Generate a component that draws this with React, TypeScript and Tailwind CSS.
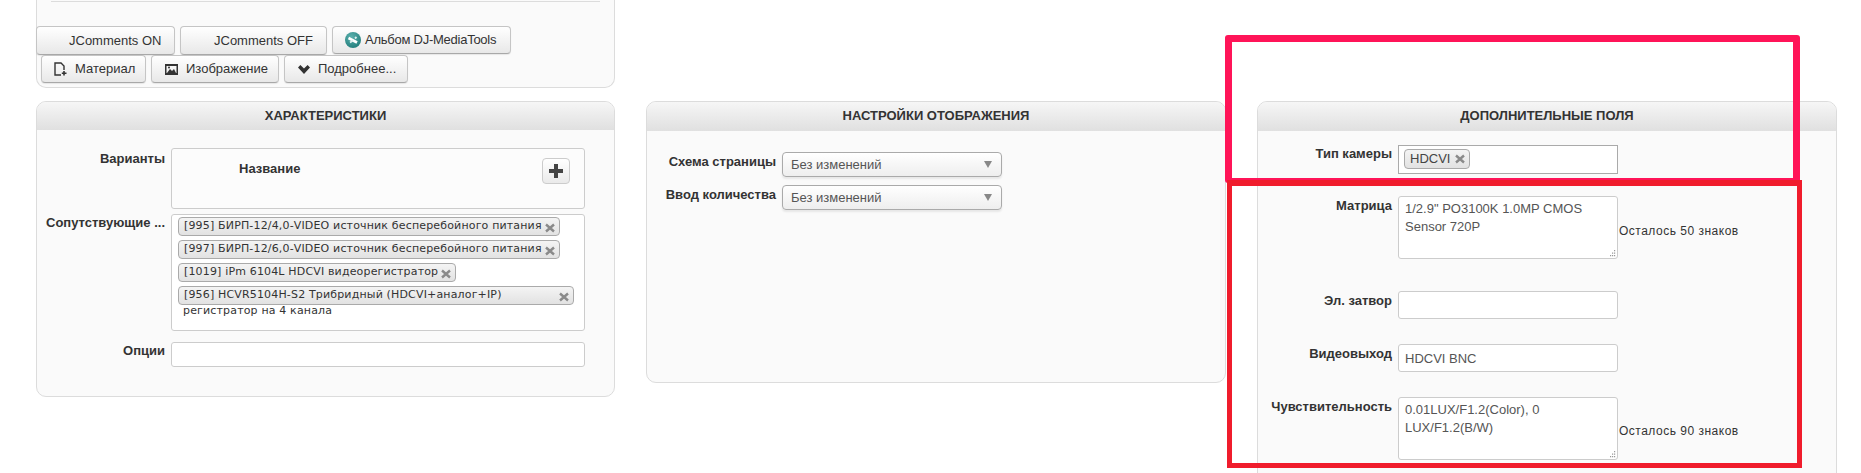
import React from "react";

const btn =
  "flex items-center rounded-[4px] border border-[#c5c5c5] border-b-[#a8a8a8] bg-gradient-to-b from-white to-[#e8e8e8] text-[13px] text-[#333] shadow-[0_1px_1px_rgba(0,0,0,0.08)]";

const XMark = ({ className }: { className?: string }) => (
  <svg className={className} width="10" height="10" viewBox="0 0 10 10">
    <path d="M1 1.5 L9 8.5 M9 1.5 L1 8.5" stroke="#8a8a8a" strokeWidth="2.4" />
  </svg>
);

const Tag = ({ text, w }: { text: string; w: number }) => (
  <div
    className="relative flex h-[19px] items-center rounded-[4px] border border-[#aaa] bg-gradient-to-b from-[#f4f4f4] to-[#e2e2e2] pl-[5px] font-['DejaVu_Sans',sans-serif] text-[11px] text-[#333] tracking-[0.16px]"
    style={{ width: w }}
  >
    <span className="whitespace-nowrap">{text}</span>
    <XMark className="absolute right-[4px] top-[5px]" />
  </div>
);

const Panel = ({ title, height, children }: { title: string; height: number; children: React.ReactNode }) => (
  <div className="w-[580px] shrink-0 rounded-[10px] border border-[#dcdcdc] bg-[#fafafa] overflow-hidden" style={{ height }}>
    <div className="h-[29px] bg-gradient-to-b from-[#f6f6f6] to-[#e0e0e0] text-center text-[13px] font-bold leading-[27px] text-[#333]">
      {title}
    </div>
    {children}
  </div>
);

const Label = ({ children, w, className }: { children: React.ReactNode; w: number; className?: string }) => (
  <div className={`shrink-0 text-right text-[13px] font-bold text-[#333] leading-[18px] whitespace-nowrap ${className ?? ""}`} style={{ width: w }}>
    {children}
  </div>
);

const Select = () => (
  <div className="flex h-[25px] w-[220px] items-center justify-between rounded-[4px] border border-[#aaa] bg-gradient-to-b from-white to-[#eee] pl-[8px] pr-[9px] text-[13px] text-[#555] shadow-[0_2px_2px_rgba(0,0,0,0.08)]">
    <span>Без изменений</span>
    <svg width="8" height="7" viewBox="0 0 8 7">
      <path d="M0 0 H8 L4 7 Z" fill="#888" />
    </svg>
  </div>
);

const field =
  "block w-[220px] rounded-[3px] border border-[#ccc] bg-white px-[6px] text-[13px] leading-[18px] text-[#555] outline-none";

const Note = ({ children, className }: { children: React.ReactNode; className?: string }) => (
  <div className={`-ml-[5px] whitespace-nowrap text-[12px] tracking-[0.5px] leading-[18px] text-[#333] ${className ?? ""}`}>{children}</div>
);

const Area = ({ value }: { value: string }) => (
  <div className="relative shrink-0">
    <textarea className={`${field} h-[63px] resize-none pt-[3px]`} defaultValue={value} />
    <svg className="absolute bottom-[2px] right-[2px]" width="7" height="7" viewBox="0 0 7 7">
      <path d="M5 0 h1.2 v1.2 h-1.2 Z M3 2.5 h1.2 v1.2 h-1.2 Z M5 2.5 h1.2 v1.2 h-1.2 Z M1 5 h1.2 v1.2 h-1.2 Z M3 5 h1.2 v1.2 h-1.2 Z M5 5 h1.2 v1.2 h-1.2 Z" fill="#999" />
    </svg>
  </div>
);

const App = () => {
  return (
    <div className="relative h-[473px] w-[1861px] overflow-hidden bg-white font-['Liberation_Sans',Arial,sans-serif]">
      <div className="flex items-start pl-[36px]">
        {/* left column */}
        <div className="w-[579px] shrink-0">
          <div className="h-[88px] rounded-b-[10px] border-x border-b border-[#dcdcdc] bg-[#fafafa]">
            <div className="mx-[14px] h-[2px] border-b border-[#dcdcdc]" />
            <div className="mt-[24px] -ml-px flex h-[29px] items-start gap-[5px]">
              <div className={`${btn} h-[29px] w-[139px] pl-[32px]`}>JComments ON</div>
              <div className={`${btn} h-[29px] w-[147px] pl-[33px]`}>JComments OFF</div>
              <div className={`${btn} h-[28px] w-[179px] pl-[12px] gap-[4px] tracking-[-0.25px]`}>
                <svg width="16" height="16" viewBox="0 0 16 16">
                  <defs>
                    <radialGradient id="album" cx="0.4" cy="0.3" r="0.8">
                      <stop offset="0" stopColor="#5bb0ad" />
                      <stop offset="1" stopColor="#1d7a78" />
                    </radialGradient>
                  </defs>
                  <circle cx="8" cy="8" r="8" fill="url(#album)" />
                  <path d="M3.5 6 L12 10.5" stroke="#fff" strokeWidth="2.6" />
                  <path d="M5 10.5 L8 8.5 M10 6.5 L11.5 5" stroke="#dff0ef" strokeWidth="1.8" />
                </svg>
                Альбом DJ-MediaTools
              </div>
            </div>
            <div className="ml-[4px] flex h-[28px] gap-[5px]">
              <div className={`${btn} h-[28px] w-[105px] pl-[12px] gap-[8px]`}>
                <svg width="13" height="14" viewBox="0 0 13 14">
                  <path d="M7 13 H1 V1 H7 L10 4 V8" fill="none" stroke="#333" strokeWidth="1.4" />
                  <path d="M10 9 V13.5 M7.8 11.2 H12.5" stroke="#333" strokeWidth="1.6" />
                </svg>
                Материал
              </div>
              <div className={`${btn} h-[28px] w-[128px] pl-[13px] gap-[8px]`}>
                <svg width="13" height="11" viewBox="0 0 13 11">
                  <path d="M0 0 H13 V11 H0 Z M1.5 2 V9 H11.5 V2 Z" fill="#333" fillRule="evenodd" />
                  <path d="M2 9 L5 5 L7 7 L9 5 L11 9 Z" fill="#333" />
                  <circle cx="4" cy="3.6" r="1" fill="#333" />
                </svg>
                Изображение
              </div>
              <div className={`${btn} h-[28px] w-[124px] pl-[13px] gap-[8px]`}>
                <svg width="12" height="9" viewBox="0 0 12 9">
                  <path d="M0 2.4 L2.4 0 L6 3.6 L9.6 0 L12 2.4 L6 9 Z" fill="#333" />
                </svg>
                Подробнее...
              </div>
            </div>
          </div>

          <div className="mt-[13px] h-[296px] w-[579px] overflow-hidden rounded-[10px] border border-[#dcdcdc] bg-[#fafafa]">
            <div className="h-[28px] bg-gradient-to-b from-[#f6f6f6] to-[#e0e0e0] text-center text-[13px] font-bold leading-[27px] text-[#333]">
              ХАРАКТЕРИСТИКИ
            </div>
            <div className="flex flex-col pt-[18px]">
              <div className="flex gap-[6px]">
                <Label w={128} className="pt-[2px]">Варианты</Label>
                <div className="relative h-[61px] w-[414px] rounded-[3px] border border-[#ccc] bg-[#fcfcfc] pl-[67px] pt-[11px] text-[13px] font-bold leading-[18px] text-[#333]">
                  Название
                  <div className="absolute right-[14px] top-[9px] flex h-[26px] w-[28px] items-center justify-center rounded-[4px] border border-[#ccc] bg-gradient-to-b from-white to-[#eaeaea]">
                    <svg width="14" height="14" viewBox="0 0 14 14">
                      <path d="M5 0 H9 V5 H14 V9 H9 V14 H5 V9 H0 V5 H5 Z" fill="#444" />
                    </svg>
                  </div>
                </div>
              </div>
              <div className="mt-[5px] flex gap-[6px]">
                <Label w={128}>Сопутствующие ...</Label>
                <div className="h-[117px] w-[414px] rounded-[3px] border border-[#ccc] bg-white pl-[6px] pt-[2px]">
                  <div className="flex flex-col gap-[4px] items-start">
                    <Tag text="[995] БИРП-12/4,0-VIDEO источник бесперебойного питания" w={382} />
                    <Tag text="[997] БИРП-12/6,0-VIDEO источник бесперебойного питания" w={382} />
                    <Tag text="[1019] iPm 6104L HDCVI видеорегистратор" w={278} />
                    <Tag text="[956] HCVR5104H-S2 Трибридный (HDCVI+аналог+IP)" w={396} />
                  </div>
                  <div className="pl-[5px] pt-[1px] font-['DejaVu_Sans',sans-serif] text-[11px] leading-[10px] tracking-[0.16px] text-[#333]">
                    регистратор на 4 канала
                  </div>
                </div>
              </div>
              <div className="mt-[11px] flex gap-[6px]">
                <Label w={128}>Опции</Label>
                <div className="h-[25px] w-[414px] rounded-[3px] border border-[#ccc] bg-white" />
              </div>
            </div>
          </div>
        </div>

        {/* middle column */}
        <div className="ml-[31px] mt-[101px] shrink-0">
          <Panel title="НАСТРОЙКИ ОТОБРАЖЕНИЯ" height={282}>
            <div className="flex flex-col gap-[8px] pt-[21px]">
              <div className="flex gap-[6px]">
                <Label w={129} className="pt-px">Схема страницы</Label>
                <Select />
              </div>
              <div className="flex gap-[6px]">
                <Label w={129} className="pt-px">Ввод количества</Label>
                <Select />
              </div>
            </div>
          </Panel>
        </div>

        {/* right column */}
        <div className="ml-[31px] mt-[101px] shrink-0">
          <Panel title="ДОПОЛНИТЕЛЬНЫЕ ПОЛЯ" height={421}>
            <div className="flex flex-col pt-[14px]">
              <div className="flex gap-[6px]">
                <Label w={134}>Тип камеры</Label>
                <div className="flex h-[29px] w-[220px] items-start border border-[#aaa] bg-white pl-[5px] pt-[3px]">
                  <div className="flex h-[20px] w-[66px] items-center gap-[5px] rounded-[4px] border border-[#aaa] bg-gradient-to-b from-[#f4f4f4] to-[#e2e2e2] pl-[5px] text-[13px] text-[#444]">
                    HDCVI
                    <XMark />
                  </div>
                </div>
              </div>
              <div className="mt-[22px] flex gap-[6px]">
                <Label w={134} className="pt-px">Матрица</Label>
                <Area value={'1/2.9" PO3100K 1.0MP CMOS Sensor 720P'} />
                <Note className="mt-[26px]">Осталось 50 знаков</Note>
              </div>
              <div className="mt-[32px] flex gap-[6px]">
                <Label w={134} className="pt-px">Эл. затвор</Label>
                <input className={`${field} h-[28px]`} defaultValue="" />
              </div>
              <div className="mt-[25px] flex gap-[6px]">
                <Label w={134} className="pt-px">Видеовыход</Label>
                <input className={`${field} h-[28px]`} defaultValue="HDCVI BNC" />
              </div>
              <div className="mt-[25px] flex gap-[6px]">
                <Label w={134} className="pt-px">Чувствительность</Label>
                <Area value="0.01LUX/F1.2(Color), 0 LUX/F1.2(B/W)" />
                <Note className="mt-[25px]">Осталось 90 знаков</Note>
              </div>
            </div>
          </Panel>
        </div>
      </div>

      {/* annotation frames drawn over the screenshot */}
      <div className="absolute left-[1225px] top-[35px] h-[148px] w-[575px] rounded-[3px] border-[7px] border-b-[5px] border-[#ff1458]" />
      <div className="absolute left-[1227px] top-[180px] h-[288px] w-[575px] border-[5px] border-t-[6px] border-[#f01c2c]" />
    </div>
  );
};

export default App;
